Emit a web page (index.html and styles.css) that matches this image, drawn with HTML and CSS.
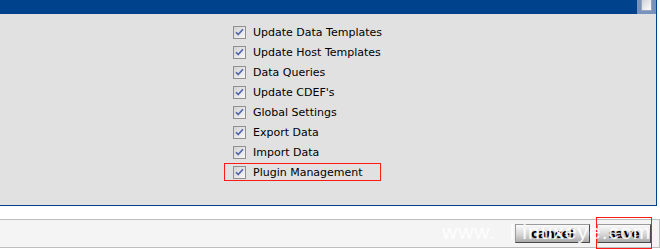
FILE: index.html
```html
<!DOCTYPE html>
<html lang="en">
<head>
    <meta charset="UTF-8">
    <title>User Management - Realm Permissions</title>
    <link rel="stylesheet" href="styles.css">
</head>
<body>
    <div class="panel">
        <div class="panel-header">
            <div class="header-title"></div>
            <div class="header-check"><span class="mini-box"></span></div>
        </div>
        <div class="panel-body">
            <ul class="realm-list">
                <li class="realm"><svg class="cb" viewBox="0 0 13 13"><use href="#cbox"/></svg>Update Data Templates</li>
                <li class="realm"><svg class="cb" viewBox="0 0 13 13"><use href="#cbox"/></svg>Update Host Templates</li>
                <li class="realm"><svg class="cb" viewBox="0 0 13 13"><use href="#cbox"/></svg>Data Queries</li>
                <li class="realm"><svg class="cb" viewBox="0 0 13 13"><use href="#cbox"/></svg>Update CDEF's</li>
                <li class="realm"><svg class="cb" viewBox="0 0 13 13"><use href="#cbox"/></svg>Global Settings</li>
                <li class="realm"><svg class="cb" viewBox="0 0 13 13"><use href="#cbox"/></svg>Export Data</li>
                <li class="realm"><svg class="cb" viewBox="0 0 13 13"><use href="#cbox"/></svg>Import Data</li>
                <li class="realm marked"><svg class="cb" viewBox="0 0 13 13"><use href="#cbox"/></svg>Plugin Management</li>
            </ul>
        </div>
    </div>

    <div class="save-bar">
        <button class="img-btn">cancel</button>
        <button class="img-btn save">save<span class="mark"></span></button>
        <span class="watermark">www.&nbsp; l inuxeye.com</span>
    </div>

    <svg width="0" height="0" class="defs">
        <defs>
            <linearGradient id="cbfill" x1="0" y1="0" x2="1" y2="1">
                <stop offset="0" stop-color="#d2d2d2"/>
                <stop offset="1" stop-color="#f8f8f8"/>
            </linearGradient>
            <g id="cbox">
                <rect x="0.5" y="0.5" width="12" height="12" fill="url(#cbfill)" stroke="#909090"/>
                <path d="M3 6.2 L5.2 8.6 L10 3.2" fill="none" stroke="#5566b0" stroke-width="1.7"/>
            </g>
        </defs>
    </svg>
</body>
</html>
```

FILE: styles.css
```css
body {
    margin: 0;
    background-color: #fff;
    font-family: 'DejaVu Sans', Verdana, sans-serif;
    font-size: 11px;
    color: #000;
    width: 660px;
    height: 249px;
    overflow: hidden;
}
.defs {
    position: absolute;
}
.panel {
    width: 656px;
    border-right: 1px solid #00438c;
    border-bottom: 1px solid #00438c;
}
.panel-header {
    display: flex;
    height: 14px;
    background-color: #00438c;
}
.header-title {
    flex: 1;
}
.header-check {
    width: 19px;
    background-color: #7792bd;
    display: flex;
    justify-content: center;
    overflow: hidden;
}
.mini-box {
    display: block;
    width: 9px;
    height: 12px;
    margin-top: -3px;
    border: 1px solid #9aa4b4;
    background: linear-gradient(135deg, #c9cdd3, #fdfdfd);
}
.panel-body {
    height: 191px;
    background-color: #e1e1e1;
    padding-top: 8px;
    box-sizing: border-box;
}
.realm-list {
    list-style: none;
    margin: 0;
    padding: 0 0 0 224px;
    display: flex;
    flex-direction: column;
    align-items: flex-start;
}
.realm {
    height: 20px;
    display: flex;
    align-items: center;
    padding-left: 9px;
}
.realm.marked {
    height: 16px;
    margin-top: 1px;
    padding: 0 17px 0 8px;
    border: 1px solid #ff1a1a;
}
.cb {
    width: 13px;
    height: 13px;
    margin-right: 7px;
    flex-shrink: 0;
}
.save-bar {
    position: relative;
    margin-top: 13px;
    height: 27px;
    border: 1px solid #bebebe;
    border-left: none;
    background-color: #f4f4f4;
    display: flex;
    justify-content: flex-end;
    align-items: center;
    gap: 7px;
    padding-right: 8px;
}
.img-btn {
    position: relative;
    height: 19px;
    margin: 0;
    padding: 0 10px;
    border: 1px solid #4a4a4a;
    border-top-color: #9a9a9a;
    border-left-color: #9a9a9a;
    background: linear-gradient(#fbfbfb, #d2d2d2 60%, #a9a9a9);
    font-family: 'DejaVu Sans', sans-serif;
    font-size: 12px;
    font-weight: bold;
    color: #000;
    min-width: 75px;
}
.img-btn.save {
    min-width: 54px;
}
.mark {
    position: absolute;
    top: -8px;
    left: -2px;
    right: -2px;
    bottom: -7px;
    border: 1px solid #ff1a1a;
}
.watermark {
    position: absolute;
    left: 442px;
    top: 0;
    font-family: 'Liberation Sans', sans-serif;
    font-size: 21px;
    letter-spacing: 1px;
    color: rgba(255, 255, 255, 0.92);
    white-space: pre;
    pointer-events: none;
}
```
